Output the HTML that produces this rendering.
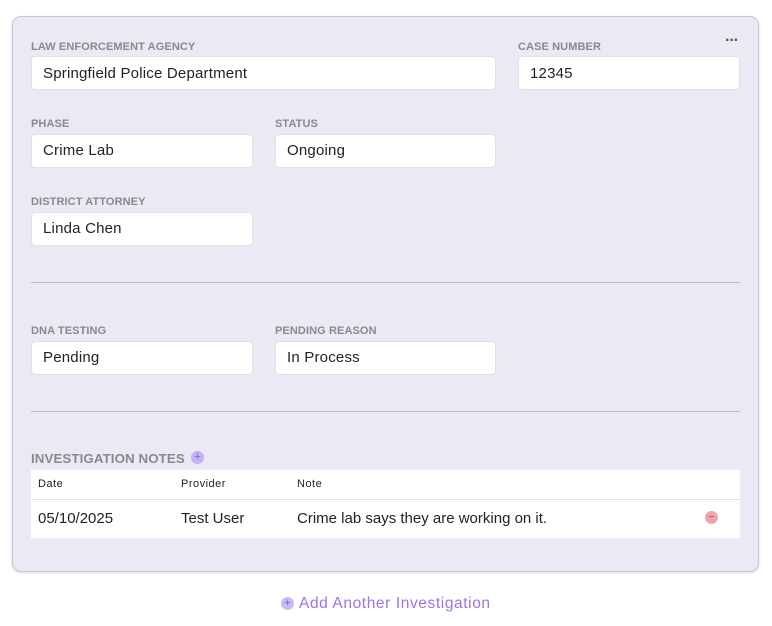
<!DOCTYPE html><html><head><style>
body{margin:0;width:772px;height:626px;background:#fff;font-family:"Liberation Sans",sans-serif;position:relative;overflow:hidden}
.card{position:absolute;left:12px;top:16px;width:745px;height:554px;background:#ecE9f5;border:1px solid #c8c5d3;border-radius:9px;box-shadow:0 1px 3px rgba(0,0,0,.12)}
.l{position:absolute;font-size:11px;font-weight:bold;color:#8a8790;letter-spacing:.1px}
.i{position:absolute;background:#fff;border:1px solid #e1dfe8;border-radius:4px;height:32px;box-sizing:border-box;font-size:15px;color:#222;line-height:32px;padding-left:11px;letter-spacing:.2px}
.hr{position:absolute;left:31px;width:709px;height:1px;background:#bdb8cc}
.t{position:absolute;font-size:11px;color:#222;letter-spacing:.5px}
.r{position:absolute;font-size:15px;color:#222}
</style></head><body>
<div class="card"></div>
<div style="position:absolute;left:725px;top:32px;font-size:16px;color:#555;font-weight:bold;letter-spacing:-1px">···</div>
<div class="l" style="left:31px;top:41px">LAW ENFORCEMENT AGENCY</div>
<div class="i" style="left:31px;top:56px;width:465px;height:34px;line-height:34px">Springfield Police Department</div>
<div class="l" style="left:518px;top:41px">CASE NUMBER</div>
<div class="i" style="left:518px;top:56px;width:222px;height:34px;line-height:34px">12345</div>
<div class="l" style="left:31px;top:118px">PHASE</div>
<div class="i" style="left:31px;top:134px;width:222px;height:34px;line-height:32px">Crime Lab</div>
<div class="l" style="left:275px;top:118px">STATUS</div>
<div class="i" style="left:275px;top:134px;width:221px;height:34px;line-height:32px">Ongoing</div>
<div class="l" style="left:31px;top:196px">DISTRICT ATTORNEY</div>
<div class="i" style="left:31px;top:212px;width:222px;height:34px;line-height:32px">Linda Chen</div>
<div class="hr" style="top:282px"></div>
<div class="l" style="left:31px;top:325px">DNA TESTING</div>
<div class="i" style="left:31px;top:341px;width:222px;height:34px;line-height:32px">Pending</div>
<div class="l" style="left:275px;top:325px">PENDING REASON</div>
<div class="i" style="left:275px;top:341px;width:221px;height:34px;line-height:32px">In Process</div>
<div class="hr" style="top:411px"></div>
<div class="l" style="left:31px;top:451px;font-size:13.3px">INVESTIGATION NOTES</div>
<div style="position:absolute;left:191px;top:451px;width:13px;height:13px;border-radius:50%;background:#c4b3f2;color:#7a5de0;font-size:11px;line-height:13px;text-align:center">+</div>
<div style="position:absolute;left:31px;top:470px;width:709px;height:68px;background:#fff"></div>
<div style="position:absolute;left:31px;top:499px;width:709px;height:1px;background:#e3e1e8"></div>
<div class="t" style="left:38px;top:478px">Date</div>
<div class="t" style="left:181px;top:478px">Provider</div>
<div class="t" style="left:297px;top:478px">Note</div>
<div class="r" style="left:38px;top:510px">05/10/2025</div>
<div class="r" style="left:181px;top:510px">Test User</div>
<div class="r" style="left:297px;top:510px">Crime lab says they are working on it.</div>
<div style="position:absolute;left:705px;top:511px;width:13px;height:13px;border-radius:50%;background:#f0a5ad;color:#c23a4a;font-size:11px;line-height:12px;text-align:center">−</div>
<div style="position:absolute;left:281px;top:597px;width:13px;height:13px;border-radius:50%;background:#c9b9f4;color:#7a5de0;font-size:11px;line-height:13px;text-align:center">+</div>
<div style="position:absolute;left:299px;top:595px;font-size:15.5px;color:#9a74ec;letter-spacing:.6px">Add Another Investigation</div>
</body></html>
